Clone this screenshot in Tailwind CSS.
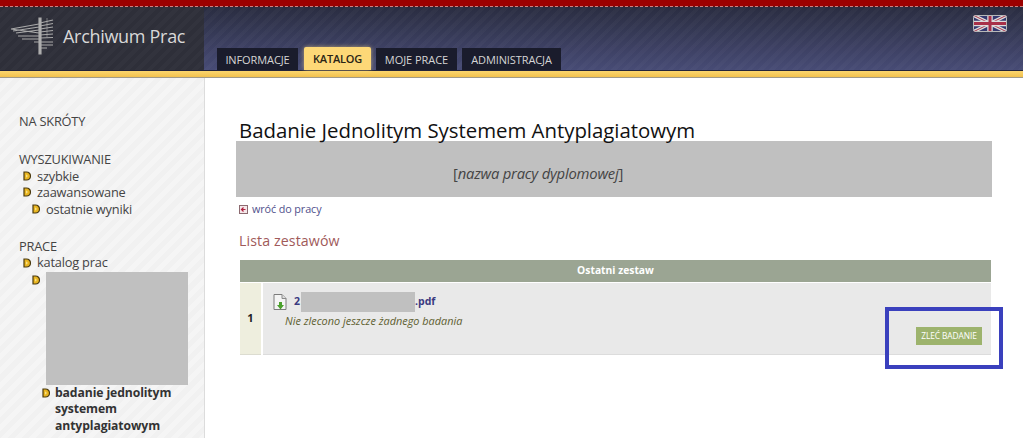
<!DOCTYPE html>
<html lang="pl">
<head>
	<meta charset="UTF-8">
	<title>Archiwum Prac</title>
	<script src="https://cdn.jsdelivr.net/npm/@tailwindcss/browser@4"></script>
</head>

<body class="relative h-[438px] w-[1023px] overflow-hidden bg-white font-['Open_Sans',sans-serif] text-[#333]">
	<svg class="hidden">
		<symbol id="bullet" viewBox="0 0 8 10">
			<path d="M1 1 H3.5 C6 1 7.5 3 7.5 5 C7.5 7 6 9 3.5 9 H1 Z" fill="#e8b520" stroke="#4a3a10" stroke-width="1.2"/>
			<path d="M3 3.2 L5 5 L3 6.8 Z" fill="#f7e08a"/>
		</symbol>
	</svg>

	<!-- top bar -->
	<div class="h-[6px] bg-[#9c0000]"></div>
	<div class="h-px border-b border-dashed border-[#d08080] bg-[#5a1a20]"></div>

	<!-- header -->
	<div class="flex h-[63px] bg-[linear-gradient(#2a2d41,#474b75)]">
		<div class="flex w-[204px] shrink-0 items-center bg-[repeating-linear-gradient(135deg,#2e2f39_0px,#2e2f39_4px,#32333d_4px,#32333d_8px)] pb-[7px] pl-[10px]">
			<svg class="h-[44px] w-[44px] shrink-0" viewBox="0 0 44 44" fill="none" stroke="#a9a9a9" stroke-width="1.2">
				<path d="M1 16 L29 11 M3 18 L29 14 M6 20 L29 17 M1 16 L29 20 M8 23 L29 23 M12 26 L29 26 M24 29 L43 29"/>
				<path d="M30 10 L43 7 M30 13 L43 10.500 M30 16 L43 14 M30 19 L43 17.500 M30 22 L43 21 M30 25 L43 24.500 M30 32 L43 32 M30 35 L37 35"/>
				<path d="M29 5 H31 V41 H29 Z" fill="#b5b5b5"/>
				<path d="M37 5 V24" stroke-width="0.6"/>
			</svg>
			<span class="ml-[9px] mt-[1px] text-[18px] leading-none tracking-[-0.3px] text-[#d8d8d8]">Archiwum Prac</span>
		</div>
		<div class="flex min-w-0 flex-1 flex-col pl-[13px] bg-[repeating-linear-gradient(135deg,transparent_0px,transparent_4px,rgba(255,255,255,0.025)_4px,rgba(255,255,255,0.025)_8px)]">
			<div class="flex h-[40px] justify-end pr-[16px] pt-[8px]">
				<svg class="h-[17px] w-[34px] rounded-[3px]" viewBox="0 0 34 17">
					<rect width="34" height="17" fill="#34386f"/>
					<path d="M0 0 L34 17 M34 0 L0 17" stroke="#dcdcdc" stroke-width="3.500"/>
					<path d="M0 0 L34 17 M34 0 L0 17" stroke="#a8344a" stroke-width="1"/>
					<path d="M17 0 V17 M0 8.500 H34" stroke="#dcdcdc" stroke-width="5.500"/>
					<path d="M17 0 V17 M0 8.500 H34" stroke="#a83048" stroke-width="3"/>
					<rect x="0.500" y="0.500" width="33" height="16" rx="2" fill="none" stroke="#b8b8b8"/>
				</svg>
			</div>
			<div class="flex h-[23px] items-end gap-[5px] text-[11px] leading-none">
				<a class="flex h-[22px] w-[81px] items-center justify-center bg-[#1a1c2c] tracking-[-0.1px] text-[#d5d5d5]" href="#">INFORMACJE</a>
				<a class="ml-px flex h-[23px] w-[67px] items-center justify-center rounded-t-[2px] bg-[#fdd877] font-semibold tracking-[-0.2px] text-[#2a2415] shadow-[0_0_4px_rgba(255,220,130,0.6)]" href="#">KATALOG</a>
				<a class="flex h-[22px] w-[81px] items-center justify-center bg-[#1a1c2c] tracking-[-0.05px] text-[#d5d5d5]" href="#">MOJE PRACE</a>
				<a class="flex h-[22px] w-[99px] items-center justify-center bg-[#1a1c2c] tracking-[-0.1px] text-[#d5d5d5]" href="#">ADMINISTRACJA</a>
			</div>
		</div>
	</div>

	<!-- yellow strip -->
	<div class="h-px bg-[#23243a]"></div>
	<div class="h-[7px] border-b border-[#a09a88] bg-[linear-gradient(#fbd66e,#f2c14e)]"></div>

	<div class="flex h-[360px]">
		<!-- sidebar -->
		<div class="h-full w-[205px] shrink-0 border-r border-[#dcdcdc] bg-[repeating-linear-gradient(135deg,#f1f1f1_0px,#f1f1f1_5px,#f5f5f5_5px,#f5f5f5_10px)] pl-[19px] pt-[35px] text-[12.800px] leading-[16.400px] tracking-[-0.2px] text-[#444]">
			<div>NA SKRÓTY</div>

			<div class="mt-[22px]">WYSZUKIWANIE</div>
			<div class="flex items-center gap-[6px] pl-[4px]"><svg class="h-[10px] w-[8px]"><use href="#bullet"/></svg>szybkie</div>
			<div class="flex items-center gap-[6px] pl-[4px]"><svg class="h-[10px] w-[8px]"><use href="#bullet"/></svg>zaawansowane</div>
			<div class="flex items-center gap-[6px] pl-[13px]"><svg class="h-[10px] w-[8px]"><use href="#bullet"/></svg>ostatnie wyniki</div>

			<div class="mt-[21px]">PRACE</div>
			<div class="flex items-center gap-[6px] pl-[4px]"><svg class="h-[10px] w-[8px]"><use href="#bullet"/></svg>katalog prac</div>
			<div class="mt-px flex items-start gap-[6px] pl-[13px]">
				<svg class="mt-[3px] h-[10px] w-[8px]"><use href="#bullet"/></svg>
				<div class="h-[113px] w-[142px] bg-[#c0c0c0]"></div>
			</div>
			<div class="flex items-start gap-[5px] pl-[23px] font-bold text-[#333]">
				<svg class="mt-[3px] h-[10px] w-[8px] shrink-0"><use href="#bullet"/></svg>
				<div class="w-[130px] text-[12.200px] tracking-[-0.1px]">badanie jednolitym systemem antyplagiatowym</div>
			</div>
		</div>

		<!-- main -->
		<div class="min-w-0 flex-1 pl-[31px] pr-[31px] pt-[41px]">
			<h1 class="pl-[3px] text-[20.400px] leading-[22px] tracking-[-0.02px] text-[#111]">Badanie Jednolitym Systemem Antyplagiatowym</h1>
			<div class="flex h-[56px] w-[756px] items-center bg-[#c0c0c0] pl-[217px] pt-[9px] text-[14.800px] tracking-[-0.2px] text-[#444]"><span>[<i>nazwa pracy dyplomowej</i>]</span></div>

			<div class="mt-[5px] flex h-[15px] items-center gap-[4px] pl-[3px] text-[10.800px] tracking-[-0.1px] text-[#50508c]">
				<svg class="h-[9px] w-[9px]" viewBox="0 0 9 9">
					<rect x="0.500" y="0.500" width="8" height="8" fill="#f5e8ea" stroke="#8c6a70"/>
					<path d="M6.500 4.500 H2.500 M4.500 2.500 L2.500 4.500 L4.500 6.500" fill="none" stroke="#b02040" stroke-width="1.200"/>
				</svg>
				<a href="#">wróć do pracy</a>
			</div>

			<h2 class="mt-[14px] pl-[3px] text-[14.200px] leading-[20px] tracking-[0.1px] text-[#a05a5a]">Lista zestawów</h2>

			<!-- table -->
			<div class="ml-[4px] mt-[9px] w-[751px]">
				<div class="flex h-[22px] items-center justify-center bg-[#9ba593] text-[10.300px] font-bold text-white">Ostatni zestaw</div>
				<div class="mt-px flex h-[72px] gap-[2px]">
					<div class="flex w-[21px] items-center justify-center border-b border-[#dcdcd0] bg-[#eeeede] text-[11px] font-bold text-[#222]">1</div>
					<div class="flex flex-1 border-b border-[#dcdcdc] bg-[#e9e9e9]">
						<div class="flex-1 pl-[10px] pt-[9px]">
							<div class="flex h-[20px] items-center text-[10.500px] font-bold text-[#3a3a80]">
								<svg class="h-[16px] w-[14px]" viewBox="0 0 14 16">
									<path d="M1 0.500 H9 L13 4.500 V15.500 H1 Z" fill="#f4f4f4" stroke="#7c7c7c"/>
									<path d="M9 0.500 V4.500 H13" fill="#ddd" stroke="#8a8a8a"/>
									<path d="M6 8 H9 V11 H11 L7.500 15.500 L4 11 H6 Z" fill="#4aa02c"/>
								</svg>
								<span class="ml-[7px]">2</span>
								<span class="ml-[1px] h-[20px] w-[114px] bg-[#c0c0c0]"></span>
								<span>.pdf</span>
							</div>
							<div class="mt-px pl-[12px] text-[10.900px] italic leading-[15px] text-[#5e6030]">Nie zlecono jeszcze żadnego badania</div>
						</div>
						<div class="pr-[9px] pt-[44px]">
							<a class="flex h-[18px] w-[66px] items-center justify-center bg-[#9db36d] text-[8.400px] tracking-[-0.1px] text-white" href="#">ZLEĆ BADANIE</a>
						</div>
					</div>
				</div>
			</div>
		</div>
	</div>

	<!-- annotation drawn over the screenshot -->
	<div class="absolute left-[885px] top-[307px] h-[62px] w-[118px] border-[4px] border-[#3a40bd]"></div>
</body>

</html>
